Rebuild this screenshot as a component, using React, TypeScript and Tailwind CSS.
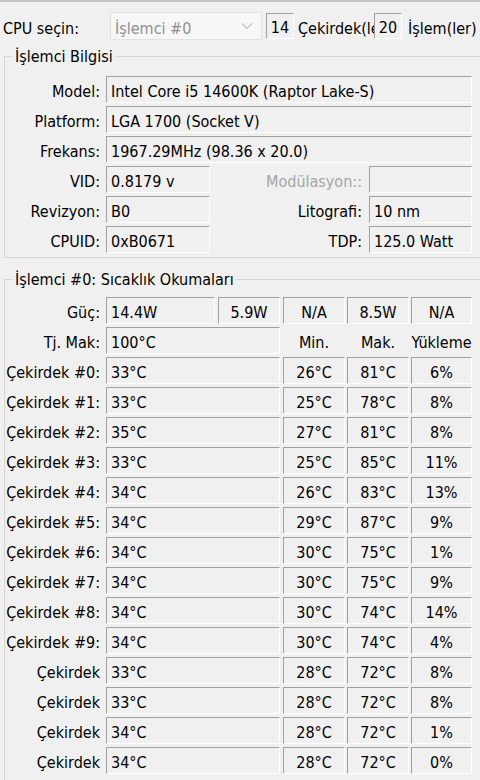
import React from "react";

const font = { fontFamily: '"DejaVu Sans Condensed", "Liberation Sans", sans-serif' };

const sunkenBase =
  "border border-t-[#a0a0a0] border-l-[#a0a0a0] border-r-white border-b-white flex items-center shrink-0";
const sunken = `${sunkenBase} h-[27px] pt-[4px]`;

function Box({ w, children, center }: { w: string; children?: React.ReactNode; center?: boolean }) {
  return (
    <div className={`${sunken} ${w} ${center ? "justify-center" : "pl-[4px]"} whitespace-nowrap overflow-hidden`}>
      {children}
    </div>
  );
}

function Label({ children }: { children: React.ReactNode }) {
  return <div className="w-[95px] shrink-0 text-right mr-[6px] pt-[4px] whitespace-nowrap">{children}</div>;
}

function RightLabel({ children, gray }: { children: React.ReactNode; gray?: boolean }) {
  return (
    <div className={`w-[152px] text-right pt-[4px] whitespace-nowrap ${gray ? "text-[#a5a5a5]" : ""}`}>{children}</div>
  );
}

const cores: [string, string, string, string, string][] = [
  ["Çekirdek #0:", "33°C", "26°C", "81°C", "6%"],
  ["Çekirdek #1:", "33°C", "25°C", "78°C", "8%"],
  ["Çekirdek #2:", "35°C", "27°C", "81°C", "8%"],
  ["Çekirdek #3:", "33°C", "25°C", "85°C", "11%"],
  ["Çekirdek #4:", "34°C", "26°C", "83°C", "13%"],
  ["Çekirdek #5:", "34°C", "29°C", "87°C", "9%"],
  ["Çekirdek #6:", "34°C", "30°C", "75°C", "1%"],
  ["Çekirdek #7:", "34°C", "30°C", "75°C", "9%"],
  ["Çekirdek #8:", "34°C", "30°C", "74°C", "14%"],
  ["Çekirdek #9:", "34°C", "30°C", "74°C", "4%"],
  ["Çekirdek", "33°C", "28°C", "72°C", "8%"],
  ["Çekirdek", "33°C", "28°C", "72°C", "8%"],
  ["Çekirdek", "34°C", "28°C", "72°C", "1%"],
  ["Çekirdek", "34°C", "28°C", "72°C", "0%"],
];

export default function App() {
  return (
    <div
      style={font}
      className="w-[480px] h-[780px] overflow-hidden bg-[#f0f0f0] text-black text-[16px] leading-[19px] border-t-2 border-t-[#c4c4c4]"
    >
      {/* top row */}
      <div className="mt-[10px] flex items-center h-[28px]">
        <div className="w-[110px] pl-[3px] pt-[4px] shrink-0 whitespace-nowrap">CPU seçin:</div>
        <div className="w-[152px] h-[28px] shrink-0 border border-[#e2e2e2] bg-[#f7f7f7] flex items-center pl-[4px] pr-[8px] text-[#8f8f8f]">
          <span className="flex-1 pt-[4px]">İşlemci #0</span>
          <svg width="12" height="8" viewBox="0 0 12 8">
            <polyline points="1,1.5 6,6.5 11,1.5" fill="none" stroke="#c2c2c2" strokeWidth="1.2" />
          </svg>
        </div>
        <div className={`ml-[4px] w-[28px] h-[26px] pt-[3px] ${sunkenBase} justify-center`}>14</div>
        <div className="ml-[4px] w-[76px] pt-[4px] overflow-hidden whitespace-nowrap shrink-0">Çekirdek(ler)</div>
        <div className={`w-[28px] h-[26px] pt-[3px] ${sunkenBase} justify-center`}>20</div>
        <div className="ml-[6px] pt-[4px] whitespace-nowrap">İşlem(ler)</div>
      </div>

      {/* Group 1 */}
      <fieldset className="mt-[6px] ml-[4px] w-[480px] border border-[#d5d5d5] pb-[4px]">
        <legend className="ml-[8px] px-[2px] leading-[18px] pt-[2px]">İşlemci Bilgisi</legend>
        <div className="pt-[10px] flex flex-col gap-[3px]">
          <div className="flex items-center">
            <Label>Model:</Label>
            <Box w="w-[366px]">Intel Core i5 14600K (Raptor Lake-S)</Box>
          </div>
          <div className="flex items-center">
            <Label>Platform:</Label>
            <Box w="w-[366px]">LGA 1700 (Socket V)</Box>
          </div>
          <div className="flex items-center">
            <Label>Frekans:</Label>
            <Box w="w-[366px]">1967.29MHz (98.36 x 20.0)</Box>
          </div>
          <div className="flex items-center">
            <Label>VID:</Label>
            <Box w="w-[104px]">0.8179 v</Box>
            <RightLabel gray>Modülasyon::</RightLabel>
            <div className="ml-[7px]">
              <Box w="w-[103px]" />
            </div>
          </div>
          <div className="flex items-center">
            <Label>Revizyon:</Label>
            <Box w="w-[104px]">B0</Box>
            <RightLabel>Litografi:</RightLabel>
            <div className="ml-[7px]">
              <Box w="w-[103px]">10 nm</Box>
            </div>
          </div>
          <div className="flex items-center">
            <Label>CPUID:</Label>
            <Box w="w-[104px]">0xB0671</Box>
            <RightLabel>TDP:</RightLabel>
            <div className="ml-[7px]">
              <Box w="w-[103px]">125.0 Watt</Box>
            </div>
          </div>
        </div>
      </fieldset>

      {/* Group 2 */}
      <fieldset className="mt-[11px] ml-[4px] w-[480px] border border-[#d5d5d5] pb-[10px]">
        <legend className="ml-[8px] px-[2px] leading-[18px] pt-[2px]">İşlemci #0: Sıcaklık Okumaları</legend>
        <div className="pt-[8px] flex flex-col gap-[3px]">
          <div className="flex items-center">
            <Label>Güç:</Label>
            <Box w="w-[109px]">14.4W</Box>
            <div className="ml-[3px]">
              <Box w="w-[62px]" center>5.9W</Box>
            </div>
            <div className="ml-[3px]">
              <Box w="w-[62px]" center>N/A</Box>
            </div>
            <div className="ml-[2px]">
              <Box w="w-[62px]" center>8.5W</Box>
            </div>
            <div className="ml-[2px]">
              <Box w="w-[61px]" center>N/A</Box>
            </div>
          </div>
          <div className="flex items-center h-[27px]">
            <Label>Tj. Mak:</Label>
            <Box w="w-[174px]">100°C</Box>
            <div className="ml-[3px] w-[62px] pt-[4px] text-center">Min.</div>
            <div className="ml-[2px] w-[62px] pt-[4px] text-center">Mak.</div>
            <div className="ml-[2px] w-[61px] pt-[4px] text-center whitespace-nowrap">Yükleme</div>
          </div>
          {cores.map((c, i) => (
            <div key={i} className="flex items-center">
              <Label>{c[0]}</Label>
              <Box w="w-[174px]">{c[1]}</Box>
              <div className="ml-[3px]">
                <Box w="w-[62px]" center>{c[2]}</Box>
              </div>
              <div className="ml-[2px]">
                <Box w="w-[62px]" center>{c[3]}</Box>
              </div>
              <div className="ml-[2px]">
                <Box w="w-[61px]" center>{c[4]}</Box>
              </div>
            </div>
          ))}
        </div>
      </fieldset>
    </div>
  );
}
